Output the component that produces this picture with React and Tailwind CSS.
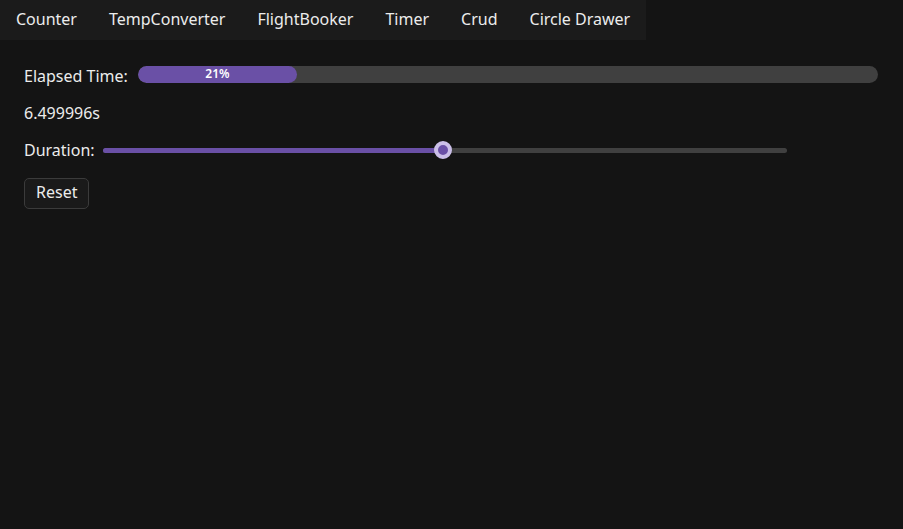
import React, { useState } from "react";

const tabs = ["Counter", "TempConverter", "FlightBooker", "Timer", "Crud", "Circle Drawer"];

const Timer = () => {
  const [duration] = useState(0.5);
  const elapsed = 6.499996;
  const pct = 21;

  return (
    <div className="flex flex-col pl-6 pr-[25px] pt-[22px] text-[16px] text-[#ececec]">
      {/* Elapsed */}
      <div className="flex items-center h-6">
        <span className="pt-[3px]">Elapsed Time:</span>
        <div className="ml-[10px] flex-1 h-[17px] rounded-full bg-[#404040] overflow-hidden">
          <div
            className="h-full rounded-full bg-[#6a50a6] flex items-center justify-center text-[12px] font-semibold text-white"
            style={{ width: `${pct}.5%` }}
          >
            {pct}%
          </div>
        </div>
      </div>

      <div className="mt-[15px] h-6 flex items-center">{elapsed}s</div>

      {/* Duration slider */}
      <div className="mt-[13px] flex items-center h-6">
        <span>Duration:</span>
        <div className="ml-2 relative w-[684px] h-[5px] rounded-full bg-[#404040]">
          <div
            className="h-full rounded-full bg-[#6a50a6]"
            style={{ width: `${duration * 100}%` }}
          />
          <div
            className="absolute top-1/2 -translate-x-1/2 -translate-y-1/2 w-[18px] h-[18px] rounded-full border-4 border-[#cbbfe8] bg-[#6a50a6]"
            style={{ left: `${duration * 100 - 0.3}%` }}
          />
        </div>
      </div>

      <div className="mt-4">
        <button className="h-[31px] px-[11px] pb-[3px] rounded-[5px] border border-[#3b3b3b] bg-[#1a1a1a] text-[#ececec]">
          Reset
        </button>
      </div>
    </div>
  );
};

export default function App() {
  const [active, setActive] = useState("Timer");

  return (
    <div
      className="min-h-screen bg-[#141414]"
      style={{ fontFamily: '"Noto Sans", sans-serif' }}
    >
      <div className="flex w-fit h-10 bg-[#1b1b1b]">
        {tabs.map((t) => (
          <button
            key={t}
            onClick={() => setActive(t)}
            className="px-4 h-10 pb-[2px] text-[16px] text-[#ececec]"
          >
            {t}
          </button>
        ))}
      </div>
      {active === "Timer" && <Timer />}
    </div>
  );
}
